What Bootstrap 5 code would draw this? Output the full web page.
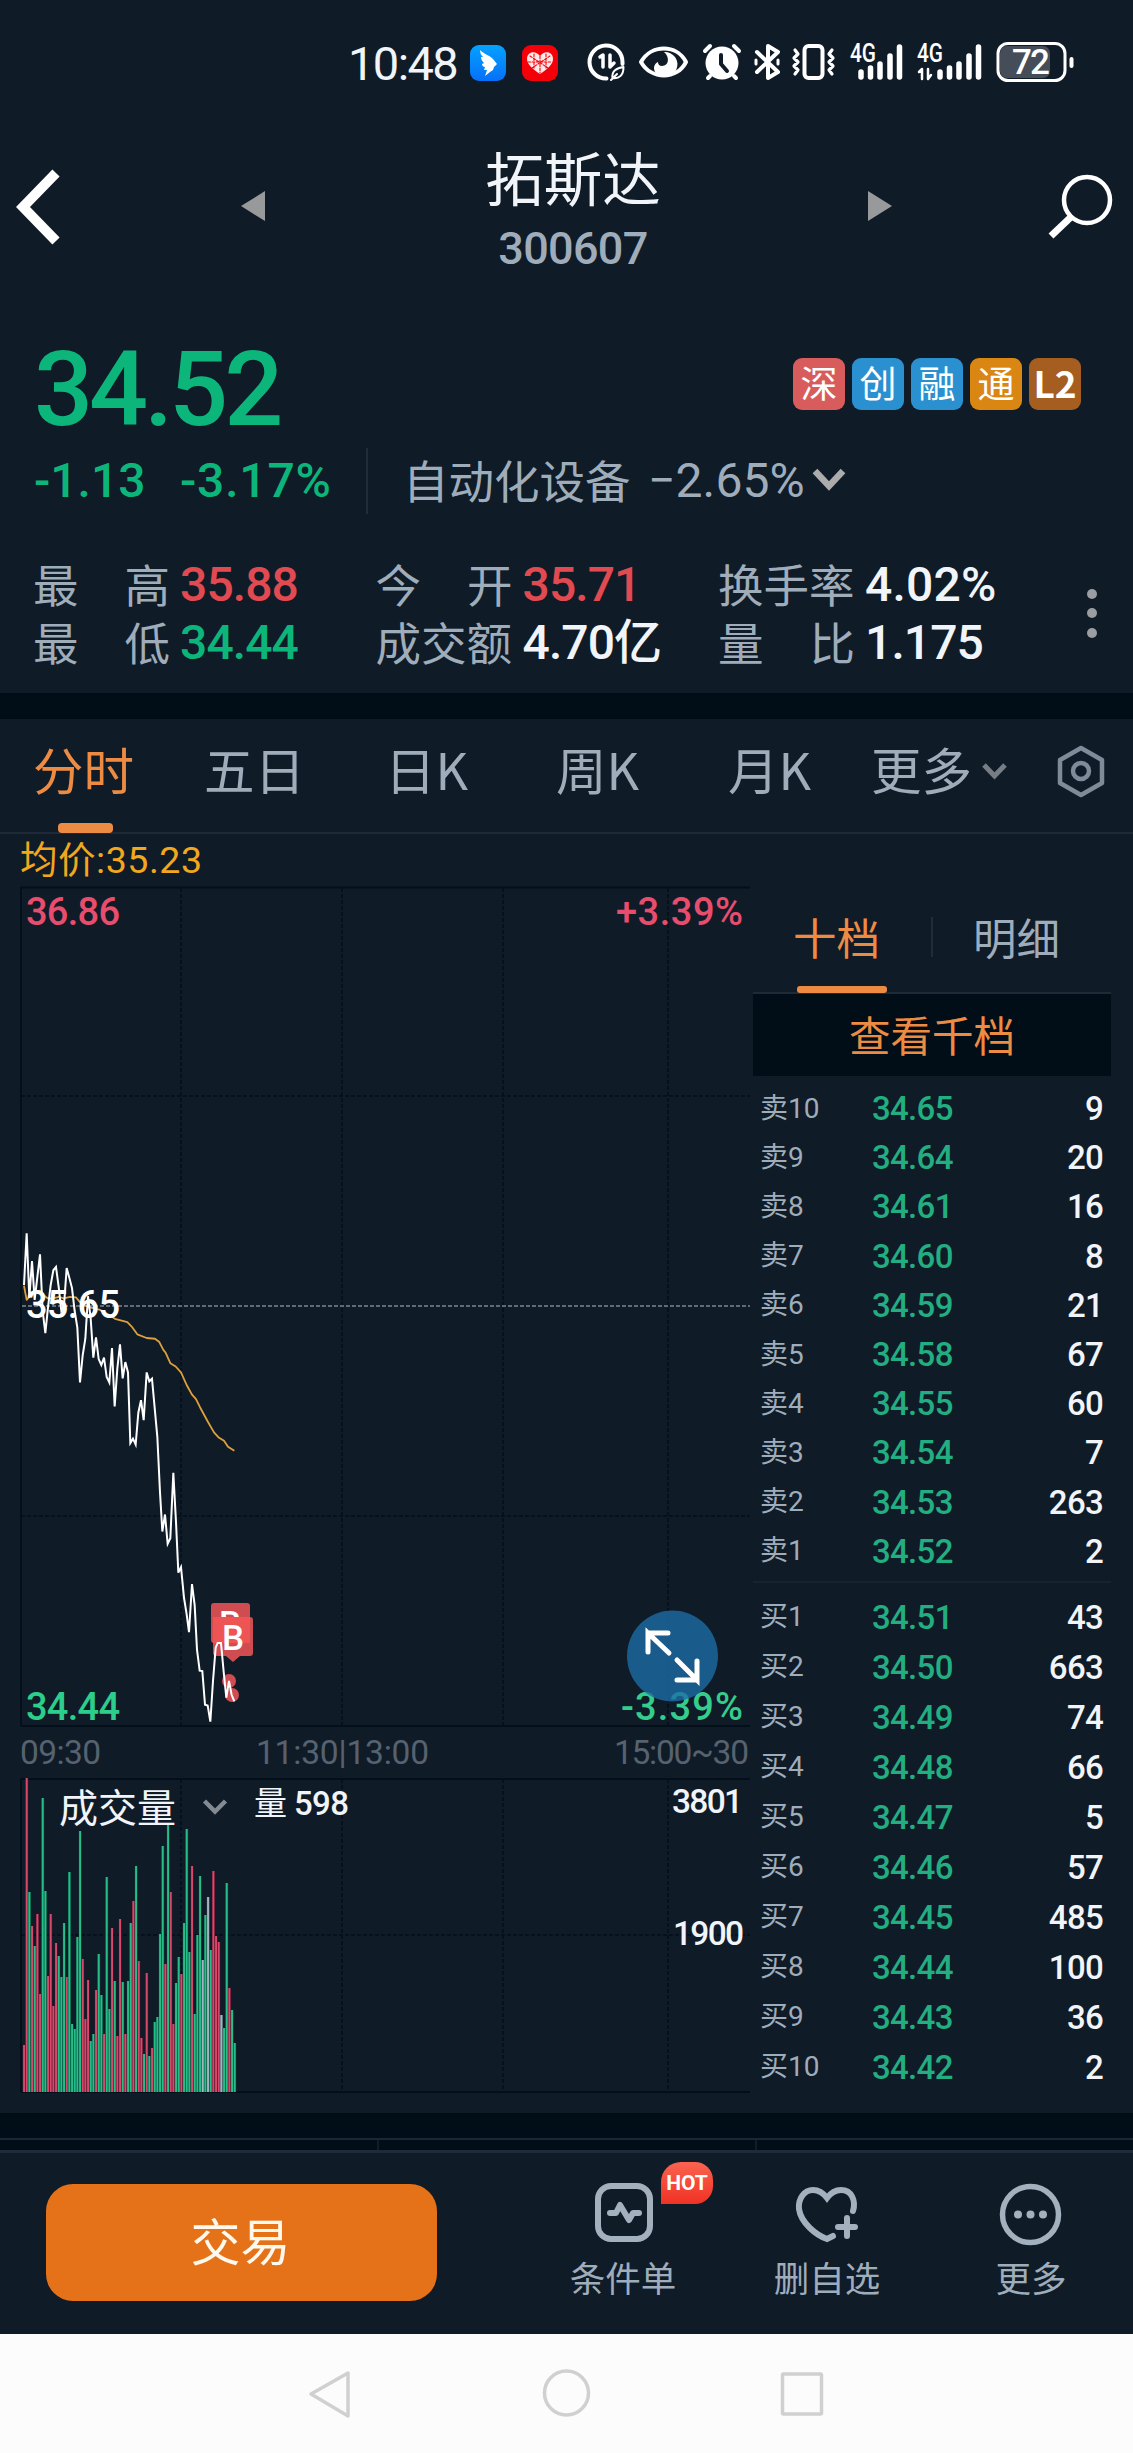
<!DOCTYPE html>
<html lang="zh-CN">
<head>
<meta charset="utf-8">
<meta name="viewport" content="width=device-width, initial-scale=1">
<title>拓斯达 300607</title>
<link href="https://cdn.jsdelivr.net/npm/bootstrap@5.3.0/dist/css/bootstrap.min.css" rel="stylesheet">
<style>
:root{--bg:#101b28;--dark:#010e18;--mut:#9fadbb;--grn:#0cb67b;--red:#e04a50;--org:#ee8b43}
body{background:var(--bg);color:#f1f4f8;font-family:Roboto,"Noto Sans CJK SC",sans-serif;width:1133px;height:2453px;overflow:hidden;line-height:1}
svg{display:block;flex:none}
svg text{font-family:Roboto,"Noto Sans CJK SC",sans-serif}
.mut{color:var(--mut)}.grn{color:var(--grn)}.redc{color:var(--red)}.org{color:var(--org)}
.cj{font-family:"Noto Sans CJK SC",sans-serif;font-weight:400;white-space:nowrap}
.num{font-weight:500;white-space:nowrap}
.statusbar{height:130px;padding-left:348px}
.clock{font-size:47px;line-height:56px;letter-spacing:-1.6px;width:113px;padding-top:36px}
.titlebar{height:190px}
.ttl{font-size:58.5px;line-height:64px;padding-top:14px}
.code{font-size:45px;line-height:46px;letter-spacing:-.7px;padding-top:18px}
.pricebox{height:128px;padding:22px 52px 0 34px}
.price{font-size:104px;line-height:96px;letter-spacing:-4px}
.tags{gap:7px;padding-top:16px}
.tagb{width:52px;height:52px;border-radius:9px;font-size:37px;line-height:48px;text-align:center;color:#fff}
.chg{height:66px;padding-left:34px;font-size:48px;line-height:66px}
.chg .cj{line-height:62px}
.vr-line{width:2px;height:66px;background:#1f2d3b}
.stats{height:179px;padding:42px 0 0 34px}
.stat-col{width:342.5px;font-size:48px;line-height:58px}
.lab{width:137px;font-size:45.5px;line-height:54px;display:flex;justify-content:space-between;margin-left:-1px}
.stat-col .num{letter-spacing:-.9px;padding-left:10px}
.band{height:26px;background:var(--dark)}
.ktabs{height:115px;border-bottom:2px solid #1e2a38;font-size:50.5px;line-height:99px}
.ktabs>div{height:113px}
.bar-on{width:55px;height:10px;border-radius:4px;background:var(--org);position:absolute;left:25px;bottom:-1px}
.main-area{height:1279px}
.book{width:358px;font-size:33px}
.btabs{height:160px;border-bottom:2px solid #1e2a38;font-size:43.5px;padding-top:80px}
.btabs .cj{line-height:46px;height:79px}
.bon{width:90px;height:7px;border-radius:3px;background:var(--org);position:absolute;left:4px;bottom:0}
.qd{height:82px;background:var(--dark);font-size:41.5px;line-height:81px}
.ords{padding:9px 8px 0 7px}
.ords.sell{padding-top:8px;height:507px;border-bottom:2px solid #162331}
.ords.sell .orow{height:49.2px}
.ords .orow{height:50px}
.orow .l{width:112px;font-size:28px;font-weight:400}
.orow .num{letter-spacing:-.7px}
.orow .p{color:#22ae80}
.cells{height:12px;background:var(--dark);border-top:2px solid #1a2836}
.cells>div+div{border-left:2px solid #101e2b}
.foot{height:184px;padding-left:46px;border-top:3px solid #1d2b3a}
.tradebtn,.tradebtn:hover{width:391px;height:117px;border-radius:27px;background:#e57118;color:#fff8ec;font-size:50px;line-height:100px;margin-top:31px;padding:0 2px 8px 0;border:0}
.fi{font-size:35.5px;line-height:36px;text-align:center}
.hot{position:absolute;left:96px;top:9px;width:52px;height:42px;border-radius:20px 18px 18px 0;background:linear-gradient(#fb6350,#f03224);color:#fff;font:700 21px/42px Roboto,sans-serif;text-align:center}
.sysnav{height:119px;background:#fcfcfc}
</style>
<script src="https://cdn.jsdelivr.net/npm/bootstrap@5.3.0/dist/js/bootstrap.bundle.min.js"></script>
</head>
<body>
<!-- status bar -->
<div class="statusbar d-flex">
  <div class="clock">10:48</div>
  <svg width="672" height="130" viewBox="461 0 672 130" fill="none" stroke="#fff" stroke-width="4" stroke-linecap="round" stroke-linejoin="round">
    <defs><linearGradient id="bl" x1="0" y1="0" x2="0" y2="1"><stop stop-color="#05a2ff"/><stop offset="1" stop-color="#0670f8"/></linearGradient></defs>
    <rect x="470" y="45" width="36" height="36" rx="9" fill="url(#bl)" stroke="none"/>
    <path d="M480 50c2 3 9 5 13 9l4 5-3 3-1 3-3 2-5 4 2-6-3 0 1-3c-2 0-3-2-3-3l2-1c-2-2-3-4-3-6l2 0c-2-2-3-4-3-7z" fill="#fff" stroke="none"/>
    <rect x="522" y="45" width="36" height="36" rx="9" fill="#f30009" stroke="none"/>
    <path d="M540 74c-6-4-13-9-13-15 0-8 9-9 13-3 4-6 13-5 13 3 0 6-7 11-13 15z" fill="#ffe9e9" stroke="none"/>
    <path d="M540 56v17M530 56l18 12M550 56l-18 12M528 62h24M534 54v14M546 54v14" stroke="#f30009" stroke-width="1.100" stroke-dasharray="2.500 1.500"/>
    <path d="M622.500 62a16.500 16.500 0 1 0-16 16.500M622.500 62v2"/>
    <path d="M600 57l3-2v12M610 55v12l4-4" stroke-width="3.500"/>
    <path d="M612.500 78c-1-7 4-10 11-11 0 8-4 12-11 11zM611 80l6-6" stroke-width="2"/>
    <path d="M641 62c10-18 36-18 45 0-9 18-35 18-45 0z" stroke-width="4"/>
    <path d="M664 52c6 5 5 14-2 14-3 0-4-2-4-4-4 2-5 6-3 10a12.500 12.500 0 1 0 9-20z" fill="#fff" stroke="none"/>
    <circle cx="722" cy="63" r="16.500" fill="#fff" stroke="none"/><path d="M721 55v9l6 7" stroke="#101b28"/><path d="M705 51l5-5M739 51l-5-5M710 76l-2 2M734 76l2 2"/>
    <path d="M757 52l21 20-10 6V46l10 6-21 20" stroke-width="4"/><path d="M756 60v4M778 60v4" stroke-width="3"/>
    <rect x="804.500" y="46" width="18" height="32" rx="4"/>
    <path d="M795 50l3 4-4 4 4 4-4 4 4 4-3 4M832 50l-3 4 4 4-4 4 4 4-4 4 3 4" stroke-width="3.200"/>
    <path d="M861 72v5M870.500 68v9M880 64v13M890 56v21M899.500 47v30" stroke-width="5.500"/>
    <path d="M940 72v5M949.500 68v9M959 64v13M969 56v21M978.500 47v30" stroke-width="5.500"/>
    <path d="M919 72l3-3v10M928 69v10l3-4" stroke-width="2.500"/>
    <rect x="1000" y="46" width="50" height="32" rx="7" fill="#454d59" stroke="none"/>
    <rect x="998" y="43.500" width="67" height="37" rx="10" stroke-width="3"/><path d="M1071.500 59v7" stroke-width="4"/>
    <g fill="#fff" stroke="none" font-weight="500"><text x="850" y="62" font-size="25" textLength="26" lengthAdjust="spacingAndGlyphs">4G</text><text x="917" y="62" font-size="25" textLength="26" lengthAdjust="spacingAndGlyphs">4G</text><text x="1012" y="74" font-size="35" textLength="38">72</text></g>
  </svg>
</div>
<!-- title bar -->
<div class="titlebar d-flex">
  <svg width="333" height="190" viewBox="0 130 333 190"><path d="M56 173L23 207L56 241" fill="none" stroke="#fff" stroke-width="10"/><path d="M241 206l24-15v30z" fill="#97999b"/></svg>
  <div class="flex-fill text-center" style="padding-left:13px"><div class="cj ttl">拓斯达</div><div class="num code mut">300607</div></div>
  <svg width="333" height="190" viewBox="800 130 333 190"><path d="M892 206l-24-15v30z" fill="#97999b"/><circle cx="1087" cy="200" r="23" fill="none" stroke="#fff" stroke-width="4.500"/><path d="M1071 217l-20 19" stroke="#fff" stroke-width="7"/></svg>
</div>
<!-- quote -->
<div class="pricebox d-flex justify-content-between align-items-start">
  <div class="num price grn">34.52</div>
  <div class="tags d-flex cj">
    <div class="tagb" style="background:#d95c5c">深</div><div class="tagb" style="background:#2a90d0">创</div><div class="tagb" style="background:#2a90d0">融</div><div class="tagb" style="background:#d98613">通</div><div class="tagb fw-bold" style="background:#a55d20">L2</div>
  </div>
</div>
<div class="chg d-flex">
  <div class="num grn" style="width:146px">-1.13</div><div class="num grn" style="width:186px;letter-spacing:.8px">-3.17%</div>
  <div class="vr-line"></div>
  <div class="cj mut" style="font-size:45.500px;padding-left:35px;width:280px">自动化设备</div><div class="mut" style="letter-spacing:.1px;width:162px">−2.65%</div>
  <svg width="40" height="66" viewBox="810 448 40 66"><path d="M815 471l14 15 14-15" fill="none" stroke="#acacac" stroke-width="6.500"/></svg>
</div>
<div class="stats d-flex">
  <div class="stat-col">
    <div class="d-flex"><div class="lab cj mut"><span>最</span><span>高</span></div><div class="num redc">35.88</div></div>
    <div class="d-flex"><div class="lab cj mut"><span>最</span><span>低</span></div><div class="num grn">34.44</div></div>
  </div>
  <div class="stat-col">
    <div class="d-flex"><div class="lab cj mut"><span>今</span><span>开</span></div><div class="num redc">35.71</div></div>
    <div class="d-flex"><div class="lab cj mut">成交额</div><div class="num">4.70亿</div></div>
  </div>
  <div class="stat-col">
    <div class="d-flex"><div class="lab cj mut">换手率</div><div class="num" style="letter-spacing:.2px">4.02%</div></div>
    <div class="d-flex"><div class="lab cj mut"><span>量</span><span>比</span></div><div class="num">1.175</div></div>
  </div>
  <svg width="30" height="116" viewBox="1062 556 30 116" fill="#9a9ea2" overflow="visible"><circle cx="1092" cy="594" r="5"/><circle cx="1092" cy="613" r="5"/><circle cx="1092" cy="633" r="5"/></svg>
</div>
<div class="band"></div>
<div class="ktabs cj mut d-flex">
  <div class="org position-relative" style="margin-left:33px;width:171px">分时<span class="bar-on"></span></div>
  <div style="width:181px">五日</div><div style="width:171px">日K</div><div style="width:172px">周K</div><div style="width:143px">月K</div><div style="width:107px">更多</div>
  <svg width="155" height="113" viewBox="978 719 155 113" fill="none"><path d="M984 765l10.500 11 10.500-11" stroke="#767d84" stroke-width="5"/><path d="M1081 748l21 12v23l-21 12-21-12v-23z" stroke="#7f8b99" stroke-width="4.500" stroke-linejoin="round"/><circle cx="1081" cy="771" r="8" stroke="#7f8b99" stroke-width="4.500"/></svg>
</div>
<!-- chart and order book -->
<div class="main-area d-flex">
  <svg width="753" height="1279" viewBox="0 834 753 1279">
    <g fill="none" stroke="#030f1a" stroke-width="2">
      <path d="M21 887.500H750M21 1726H750M21 887V1726M21 1779H750M21 2092H750M21 1779V2092"/>
      <path d="M181 888V1726M342 888V1726M503 888V1726M668 888V1726M21 1096H750M21 1516H750M181 1779V2092M342 1779V2092M503 1779V2092M668 1779V2092M21 1935H750" stroke-dasharray="4 2" stroke-width="1.500"/>
    </g>
    <path d="M22 1306H750" stroke="#7d858f" stroke-width="1.600" stroke-dasharray="4 2"/>
    <g id="bars"></g>
    <g fill="none" stroke-linejoin="round" transform="translate(0 1200) scale(.33333 .37)">
      <path vector-effect="non-scaling-stroke" stroke="#dda03c" stroke-width="1.800" d="M72 232L80 270 88 262 104 248 120 245 132 258 144 266 160 266 176 262 192 266 210 262 228 263 240 276 252 284 270 290 300 297 330 312 345 321 382 330 395 342 412 363 440 373 465 375 478 384 490 405 497 413 511 441 527 450 543 466 560 500 576 526 588 538 600 560 624 600 642 628 655 641 672 651 684 667 703 678"/>
    </g>
    <rect x="211" y="1603" width="39" height="40" rx="3" fill="#cf4d51"/>
    <text x="219" y="1636" font-size="35" font-weight="500" fill="#fff">B</text>
    <path d="M216 1617h34q3 0 3 3v33q0 3-3 3h-10l-7 6-7-6h-10q-3 0-3-3v-33q0-3 3-3z" fill="#cf4d51"/>
    <path d="M213 1617h37v26h-37z" fill="#ef5455"/>
    <text x="222" y="1650" font-size="35" font-weight="500" fill="#fff">B</text>
    <circle cx="229" cy="1681" r="7" fill="#cf4d51"/><circle cx="232" cy="1695" r="7" fill="#cf4d51"/>
    <g fill="none" stroke-linejoin="miter" transform="translate(0 1200) scale(.33333 .37)">
      <path vector-effect="non-scaling-stroke" stroke="#fff" stroke-width="2" d="M72 230L80 90 88 265 96 165 104 270 120 147 128 300 136 360 144 290 152 230 160 190 168 181 176 235 184 300 192 285 200 184 208 210 216 238 224 300 232 345 240 493 248 420 256 375 264 260 272 320 280 426 288 371 296 430 304 446 312 426 320 478 328 493 336 400 344 558 352 455 360 390 368 482 376 438 384 466 391 657 399 645 407 661 415 575 423 541 431 595 440 466 448 490 456 483 472 640 480 790 487 896 495 850 503 929 511 914 520 737 528 870 535 1007 543 992 552 1075 560 1120 567 1168 576 1038 584 1095 591 1215 599 1272 607 1273 615 1364 623 1366 631 1410 639 1300 647 1210 653 1197 663 1197 671 1275 679 1345 687 1300 695 1338 703 1355"/>
    </g>
    <g font-size="38" font-weight="500">
      <text x="20" y="873" font-size="37.500" font-weight="400" fill="#f2a71d" textLength="182">均价:35.23</text>
      <text x="26" y="925" fill="#e84d6e" textLength="94">36.86</text><text x="616" y="925" fill="#e84d6e" textLength="127">+3.39%</text>
      <text x="26" y="1318" fill="#fff" textLength="94">35.65</text>
      <text x="26" y="1720" fill="#2bce8a" textLength="94">34.44</text><text x="621" y="1720" fill="#35cd8c" textLength="122">-3.39%</text>
    </g>
    <circle cx="672.500" cy="1656" r="45.500" fill="#1c6ea8" fill-opacity=".78"/>
    <path d="M669 1653l-21-20v19m0-19h20M677 1660l20 20v-19m0 19h-20" fill="none" stroke="#fff" stroke-width="5" stroke-linecap="round"/>
    <g font-size="33.500" fill="#56626f"><text x="20" y="1764" textLength="81">09:30</text><text x="256" y="1764" textLength="173">11:30|13:00</text><text x="614" y="1764" textLength="135">15:00~30</text></g>
    <g fill="#f1f4f8"><text x="59" y="1822" font-size="39" font-weight="400" style="font-family:'Noto Sans CJK SC'">成交量</text><text x="254" y="1815" font-size="33" font-weight="400" textLength="95">量 <tspan font-weight="500">598</tspan></text>
    <text x="672" y="1813" font-size="33.500" font-weight="500" textLength="71">3801</text><text x="673" y="1945" font-size="33.500" font-weight="500" textLength="71">1900</text></g>
    <path d="M204.500 1801l10.500 10.500 10.500-10.500" fill="none" stroke="#838a91" stroke-width="4.500"/>
  </svg>
  <div class="book">
    <div class="btabs d-flex">
      <div class="cj org position-relative" style="margin-left:40px;width:138px">十档<span class="bon"></span></div>
      <div class="vr-line" style="height:40px;margin-top:3px"></div>
      <div class="cj mut" style="margin-left:40px">明细</div>
    </div>
    <div class="qd cj org text-center">查看千档</div>
    <div class="ords sell">
      <div class="orow d-flex align-items-center"><span class="l mut">卖10</span><span class="num p">34.65</span><span class="num ms-auto">9</span></div>
      <div class="orow d-flex align-items-center"><span class="l mut">卖9</span><span class="num p">34.64</span><span class="num ms-auto">20</span></div>
      <div class="orow d-flex align-items-center"><span class="l mut">卖8</span><span class="num p">34.61</span><span class="num ms-auto">16</span></div>
      <div class="orow d-flex align-items-center"><span class="l mut">卖7</span><span class="num p">34.60</span><span class="num ms-auto">8</span></div>
      <div class="orow d-flex align-items-center"><span class="l mut">卖6</span><span class="num p">34.59</span><span class="num ms-auto">21</span></div>
      <div class="orow d-flex align-items-center"><span class="l mut">卖5</span><span class="num p">34.58</span><span class="num ms-auto">67</span></div>
      <div class="orow d-flex align-items-center"><span class="l mut">卖4</span><span class="num p">34.55</span><span class="num ms-auto">60</span></div>
      <div class="orow d-flex align-items-center"><span class="l mut">卖3</span><span class="num p">34.54</span><span class="num ms-auto">7</span></div>
      <div class="orow d-flex align-items-center"><span class="l mut">卖2</span><span class="num p">34.53</span><span class="num ms-auto">263</span></div>
      <div class="orow d-flex align-items-center"><span class="l mut">卖1</span><span class="num p">34.52</span><span class="num ms-auto">2</span></div>
    </div>
    <div class="ords">
      <div class="orow d-flex align-items-center"><span class="l mut">买1</span><span class="num p">34.51</span><span class="num ms-auto">43</span></div>
      <div class="orow d-flex align-items-center"><span class="l mut">买2</span><span class="num p">34.50</span><span class="num ms-auto">663</span></div>
      <div class="orow d-flex align-items-center"><span class="l mut">买3</span><span class="num p">34.49</span><span class="num ms-auto">74</span></div>
      <div class="orow d-flex align-items-center"><span class="l mut">买4</span><span class="num p">34.48</span><span class="num ms-auto">66</span></div>
      <div class="orow d-flex align-items-center"><span class="l mut">买5</span><span class="num p">34.47</span><span class="num ms-auto">5</span></div>
      <div class="orow d-flex align-items-center"><span class="l mut">买6</span><span class="num p">34.46</span><span class="num ms-auto">57</span></div>
      <div class="orow d-flex align-items-center"><span class="l mut">买7</span><span class="num p">34.45</span><span class="num ms-auto">485</span></div>
      <div class="orow d-flex align-items-center"><span class="l mut">买8</span><span class="num p">34.44</span><span class="num ms-auto">100</span></div>
      <div class="orow d-flex align-items-center"><span class="l mut">买9</span><span class="num p">34.43</span><span class="num ms-auto">36</span></div>
      <div class="orow d-flex align-items-center"><span class="l mut">买10</span><span class="num p">34.42</span><span class="num ms-auto">2</span></div>
    </div>
  </div>
</div>
<div class="band" style="height:25px"></div>
<div class="cells d-flex"><div class="flex-fill w-100"></div><div class="flex-fill w-100"></div><div class="flex-fill w-100"></div></div>
<!-- bottom actions -->
<div class="foot d-flex mut">
  <button class="btn tradebtn cj">交易</button>
  <div class="fi cj position-relative" style="margin-left:128px;width:116px">
    <svg class="mx-auto" width="116" height="106" viewBox="565 2153 116 106" fill="none" stroke="#a3b0be" stroke-width="6"><rect x="598" y="2186" width="52" height="53" rx="13"/><path d="M610 2213h6l4-8 9 15 4-7h6" stroke-linecap="round" stroke-linejoin="round"/></svg>条件单<span class="hot">HOT</span></div>
  <div class="fi cj" style="margin-left:88px;width:116px">
    <svg class="mx-auto" width="116" height="106" viewBox="769 2153 116 106" fill="none" stroke="#a3b0be" stroke-width="6" stroke-linecap="round"><path d="M853 2211c3-10-1-21-12-21-7 0-11 4-14 8-3-4-8-8-14-8-9 0-15 9-14 19 2 14 17 26 28 30l6-3M847 2218v18M838 2227h17"/></svg>删自选</div>
  <div class="fi cj" style="margin-left:88px;width:116px">
    <svg class="mx-auto" width="116" height="106" viewBox="973 2153 116 106" fill="#a3b0be"><circle cx="1030.500" cy="2214.500" r="28" fill="none" stroke="#a3b0be" stroke-width="5.500"/><circle cx="1018" cy="2214.500" r="4"/><circle cx="1030.500" cy="2214.500" r="4"/><circle cx="1043" cy="2214.500" r="4"/></svg>更多</div>
</div>
<div class="sysnav"><svg width="1133" height="119" viewBox="0 2334 1133 119" fill="none" stroke="#d0d0d0" stroke-width="3.500" stroke-linejoin="round"><path d="M348 2373v43l-37-22z"/><circle cx="566.500" cy="2393" r="22"/><rect x="782.500" y="2374" width="39" height="40" rx="1"/></svg></div>
<script>
// one entry per minute: height in px and direction (r up, g down, w flat)
const v="314r 200g 166r 146g 178r 98r 294g 201g 116r 178r 86r 149r 136g 115g 169g 115r 220g 68g 63g 155g 261g 133r 73r 112r 51g 58g 102r 138g 97g 58r 215g 83g 164r 111g 56r 173r 110g 58r 111g 169g 191r 226g 131r 54r 38g 119r 36g 44r 70g 75g 158g 246g 128r 269g 200r 68r 109g 135g 118r 169g 263g 140g 226r 78g 157g 216g 132w 177g 195w 142g 221r 156r 150r 77w 64g 209g 104r 82g 49g";
const c={r:["#d54a6a","#66122f"],g:["#26bd89","#06583f"],w:["#a3b4bf","#50606d"]};
document.getElementById("bars").innerHTML=("47r "+v).split(" ").map((s,i)=>{const h=parseInt(s),k=c[s.slice(-1)],x=22.8+i*8/3,y=2092-h;
return `<rect x="${x}" y="${y}" width="2.700" height="${h}" fill="${k[1]}"/><rect x="${x+.3}" y="${y}" width="1.900" height="${h}" fill="${k[0]}"/>`}).join("");
</script>
</body>
</html>
